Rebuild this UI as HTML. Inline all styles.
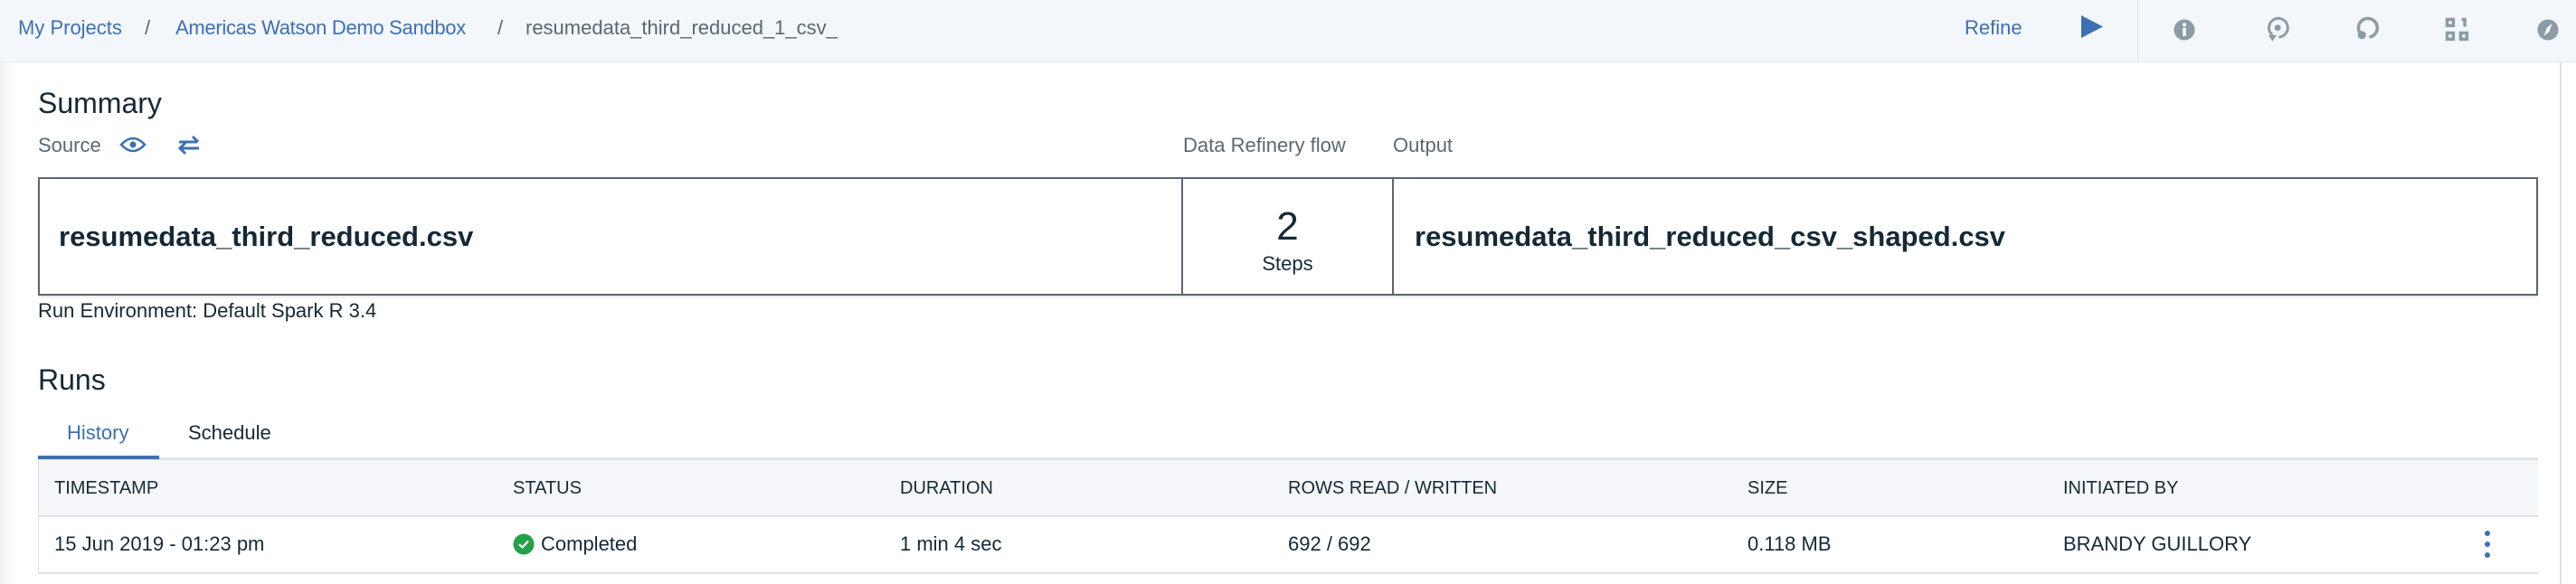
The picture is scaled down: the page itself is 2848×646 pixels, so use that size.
<!DOCTYPE html>
<html><head><meta charset="utf-8"><style>
*{margin:0;padding:0;box-sizing:border-box}
body{width:2848px;height:646px;overflow:hidden;background:#fff;font-family:"Liberation Sans",sans-serif;color:#152935;position:relative}
.a{position:absolute;white-space:nowrap}
.top{position:absolute;left:0;top:0;width:2848px;height:69px;background:#f3f6fb;border-bottom:1px solid #e4e8ee}
.bc{font-size:22px;top:18px;color:#3d70b2}
.ic{position:absolute;top:18px}
.hdr{font-size:20px;color:#152935;top:529px}
.row{font-size:22px;color:#152935;top:589px}
</style></head><body>
<div class="top"></div>
<div class="a bc" style="left:20px">My Projects</div>
<div class="a bc" style="left:160px;color:#5a6872">/</div>
<div class="a bc" style="left:194px;letter-spacing:-0.3px">Americas Watson Demo Sandbox</div>
<div class="a bc" style="left:550px;color:#5a6872">/</div>
<div class="a bc" style="left:581px;color:#5a6872">resumedata_third_reduced_1_csv_</div>
<div class="a bc" style="left:2172px">Refine</div>
<svg class="ic" style="left:2300px;top:16px" width="26" height="27"><path d="M1 1 L25 13.5 L1 26Z" fill="#3d70b2"/></svg>
<div class="a" style="left:2363px;top:0;width:1px;height:68px;background:#dfe3e8"></div>
<svg class="ic" style="left:2401px" width="28" height="30" viewBox="0 0 24 26"><circle cx="12" cy="13" r="10" fill="#8c9ba5"/><rect x="10.5" y="11" width="3" height="8" fill="#fff"/><circle cx="12" cy="8" r="1.7" fill="#fff"/></svg>
<svg class="ic" style="left:2503px" width="28" height="30" viewBox="0 0 24 26"><path d="M8 18 A9 9 0 1 1 14 20" stroke="#8c9ba5" stroke-width="2.5" fill="none"/><circle cx="13" cy="11" r="3" fill="#8c9ba5"/><path d="M4 18 L8 24 L12 18Z" fill="#8c9ba5"/></svg>
<svg class="ic" style="left:2603px" width="28" height="30" viewBox="0 0 24 26"><path d="M6 17 A9 9 0 1 1 14 20" stroke="#8c9ba5" stroke-width="3" fill="none"/><circle cx="7" cy="18" r="4" fill="#8c9ba5"/></svg>
<svg class="ic" style="left:2703px" width="28" height="30" viewBox="0 0 24 26"><g fill="none" stroke="#8c9ba5" stroke-width="3"><rect x="2" y="3" width="6" height="6"/><rect x="2" y="16" width="6" height="6"/><rect x="15" y="16" width="6" height="6"/></g><path d="M16 3h3v7" stroke="#8c9ba5" stroke-width="3" fill="none"/></svg>
<svg class="ic" style="left:2803px" width="28" height="30" viewBox="0 0 24 26"><circle cx="12" cy="13" r="10" fill="#8c9ba5"/><path d="M16 7 L13 15 L8 19 L11 11Z" fill="#fff"/></svg>
<div class="a" style="left:2830px;top:69px;width:2px;height:577px;background:#e0e0e0"></div>
<div class="a" style="left:0;top:69px;width:18px;height:577px;background:linear-gradient(to right,#f0f0f0,#fff)"></div>

<div class="a" style="left:42px;top:96px;font-size:32px">Summary</div>
<div class="a" style="left:42px;top:148px;font-size:22px;color:#5a6872">Source</div>
<svg class="a" style="left:132px;top:148px" width="30" height="24" viewBox="0 0 30 24"><path d="M2 12 Q15 -2 28 12 Q15 26 2 12Z" fill="none" stroke="#3d70b2" stroke-width="2.5"/><circle cx="15" cy="12" r="3.5" fill="#3d70b2"/></svg>
<svg class="a" style="left:194px;top:145px" width="30" height="30" viewBox="0 0 30 30"><path d="M4 12 H24 M19 6 L25 12" stroke="#3d70b2" stroke-width="3" fill="none"/><path d="M26 19 H6 M11 13 L5 19 L11 25" stroke="#3d70b2" stroke-width="3" fill="none"/></svg>
<div class="a" style="left:1308px;top:148px;font-size:22px;color:#5a6872">Data Refinery flow</div>
<div class="a" style="left:1540px;top:148px;font-size:22px;color:#5a6872">Output</div>

<div class="a" style="left:42px;top:196px;width:2764px;height:131px;border:2px solid #5a6872;box-shadow:0 2px 3px rgba(0,0,0,.1)"></div>
<div class="a" style="left:1306px;top:196px;width:2px;height:131px;background:#5a6872"></div>
<div class="a" style="left:1539px;top:196px;width:2px;height:131px;background:#5a6872"></div>
<div class="a" style="left:65px;top:244px;font-size:31px;font-weight:bold">resumedata_third_reduced.csv</div>
<div class="a" style="left:1308px;width:231px;text-align:center;top:226px;font-size:44px">2</div>
<div class="a" style="left:1308px;width:231px;text-align:center;top:279px;font-size:22px">Steps</div>
<div class="a" style="left:1564px;top:244px;font-size:31px;font-weight:bold">resumedata_third_reduced_csv_shaped.csv</div>
<div class="a" style="left:42px;top:331px;font-size:22px">Run Environment: Default Spark R 3.4</div>

<div class="a" style="left:42px;top:402px;font-size:32px">Runs</div>
<div class="a" style="left:74px;top:466px;font-size:22px;color:#3d70b2">History</div>
<div class="a" style="left:208px;top:466px;font-size:22px">Schedule</div>
<div class="a" style="left:42px;top:506px;width:2764px;height:3px;background:#dfe3e6"></div>
<div class="a" style="left:42px;top:504px;width:134px;height:4px;background:#3d70b2"></div>
<div class="a" style="left:42px;top:509px;width:2764px;height:63px;background:#f4f6f9;border-bottom:2px solid #dfe3e6;border-left:1px solid #dfe3e6"></div>
<div class="a" style="left:42px;top:572px;width:2764px;height:63px;border-bottom:2px solid #dfe3e6;border-left:1px solid #dfe3e6"></div>
<div class="a hdr" style="left:60px">TIMESTAMP</div>
<div class="a hdr" style="left:567px">STATUS</div>
<div class="a hdr" style="left:995px">DURATION</div>
<div class="a hdr" style="left:1424px">ROWS READ / WRITTEN</div>
<div class="a hdr" style="left:1932px">SIZE</div>
<div class="a hdr" style="left:2281px">INITIATED BY</div>
<div class="a row" style="left:60px">15 Jun 2019 - 01:23 pm</div>
<svg class="a" style="left:567px;top:590px" width="24" height="24"><circle cx="12" cy="12" r="11.5" fill="#24a148"/><path d="M7 12 L10.5 15.5 L17 8.5" stroke="#fff" stroke-width="2.2" fill="none"/></svg>
<div class="a row" style="left:598px">Completed</div>
<div class="a row" style="left:995px">1 min 4 sec</div>
<div class="a row" style="left:1424px">692 / 692</div>
<div class="a row" style="left:1932px">0.118 MB</div>
<div class="a row" style="left:2281px">BRANDY GUILLORY</div>
<svg class="a" style="left:2745px;top:585px" width="10" height="34"><circle cx="5" cy="5" r="3" fill="#3d70b2"/><circle cx="5" cy="17" r="3" fill="#3d70b2"/><circle cx="5" cy="29" r="3" fill="#3d70b2"/></svg>
</body></html>
